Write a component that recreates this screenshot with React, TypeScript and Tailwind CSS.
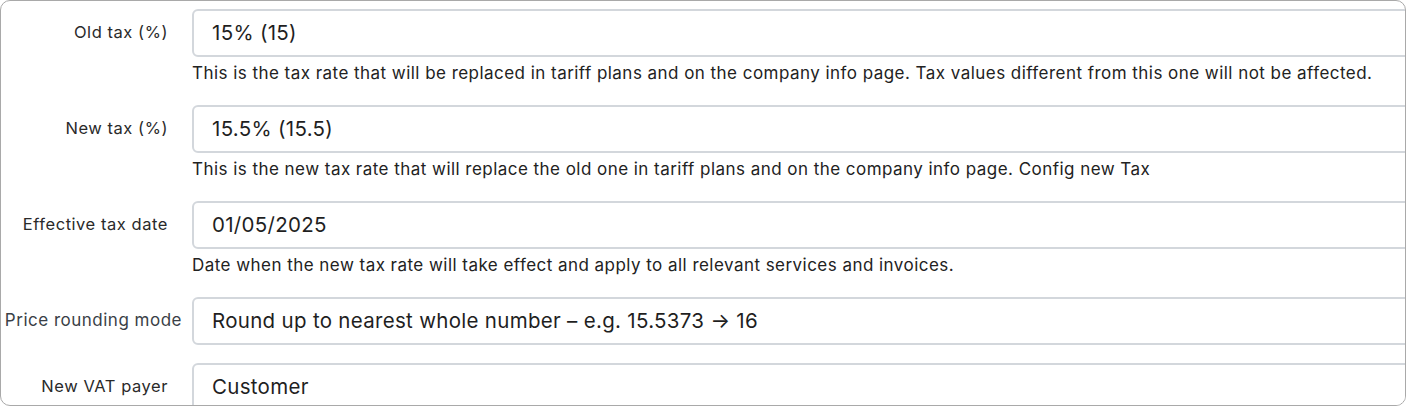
const font = { fontFamily: 'Inter, "Noto Sans", sans-serif' };

interface Field {
  label: string;
  value: string;
  help?: string;
  wideLabel?: boolean;
}

const fields: Field[] = [
  {
    label: 'Old tax (%)',
    value: '15% (15)',
    help: 'This is the tax rate that will be replaced in tariff plans and on the company info page. Tax values different from this one will not be affected.',
  },
  {
    label: 'New tax (%)',
    value: '15.5% (15.5)',
    help: 'This is the new tax rate that will replace the old one in tariff plans and on the company info page. Config new Tax',
  },
  {
    label: 'Effective tax date',
    value: '01/05/2025',
    help: 'Date when the new tax rate will take effect and apply to all relevant services and invoices.',
  },
  {
    label: 'Price rounding mode',
    value: 'Round up to nearest whole number – e.g. 15.5373 → 16',
    wideLabel: true,
  },
  {
    label: 'New VAT payer',
    value: 'Customer',
  },
];

export default function App() {
  return (
    <div className="w-[1406px] h-[406px] bg-white" style={font}>
      <div className="h-full w-full border border-[#a9a9a9] rounded-[10px] overflow-hidden pt-2">
        <div className="flex flex-col gap-[18px]">
          {fields.map((f, i) => (
            <div key={i} className="grid grid-cols-[191px_1fr]">
              <div
                className={
                  f.wideLabel
                    ? 'flex items-center justify-end h-12 pr-[10px] whitespace-nowrap text-[17px] tracking-[0.5px] text-[#3a3f47]'
                    : 'flex items-center justify-end h-12 pr-6 pb-px whitespace-nowrap text-[16.5px] tracking-[0.55px] text-[#2a2a2a]'
                }
              >
                {f.label}
              </div>
              <div className="flex flex-col">
                <div className="h-12 w-[1300px] border-2 border-[#d3d7dc] rounded-md bg-white flex items-center pl-[18px] text-[20.5px] tracking-[0.3px] text-[#1f1f1f]">
                  {f.value}
                </div>
                {f.help && (
                  <div className="mt-1 mb-[2px] text-[17px] leading-6 tracking-[0.46px] text-[#222] whitespace-nowrap">
                    {f.help}
                  </div>
                )}
              </div>
            </div>
          ))}
        </div>
      </div>
    </div>
  );
}
